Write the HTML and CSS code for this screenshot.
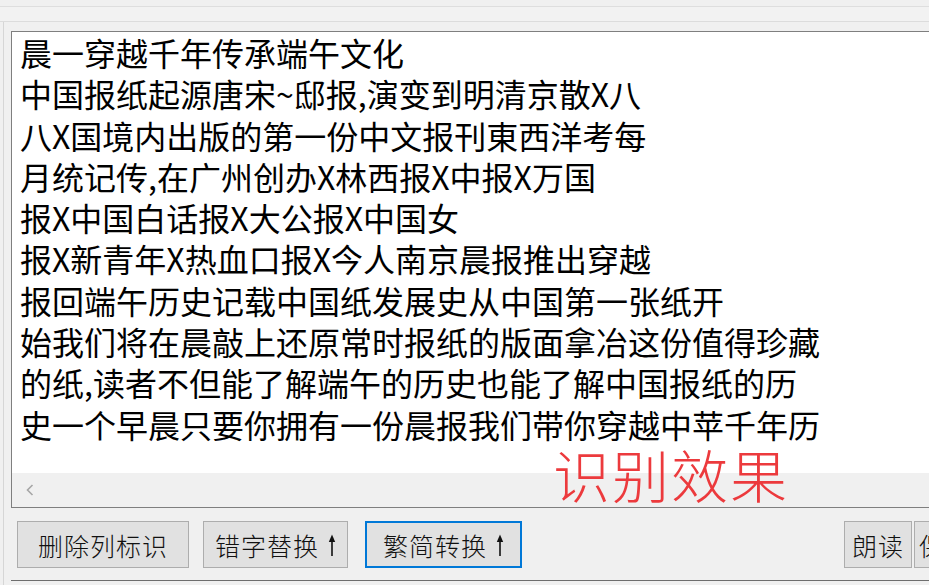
FILE: index.html
```html
<!DOCTYPE html>
<html lang="zh-CN">
<head>
<meta charset="utf-8">
<title>识别效果</title>
<link rel="stylesheet" href="styles.css">
</head>
<body>
<div class="window">
  <div class="strip-a"></div>
  <div class="strip-b"></div>
  <div class="main">
    <div class="edge"></div>
    <div class="content">
      <div class="textbox">
        <div class="text">
          <div class="line">晨一穿越千年传承端午文化</div>
          <div class="line">中国报纸起源唐宋~邸报,演变到明清京散X八</div>
          <div class="line">八X国境内出版的第一份中文报刊東西洋考每</div>
          <div class="line">月统记传,在广州创办X林西报X中报X万国</div>
          <div class="line">报X中国白话报X大公报X中国女</div>
          <div class="line">报X新青年X热血口报X今人南京晨报推出穿越</div>
          <div class="line">报回端午历史记载中国纸发展史从中国第一张纸开</div>
          <div class="line">始我们将在晨敲上还原常时报纸的版面拿冶这份值得珍藏</div>
          <div class="line">的纸,读者不但能了解端午的历史也能了解中国报纸的历</div>
          <div class="line">史一个早晨只要你拥有一份晨报我们带你穿越中苹千年历</div>
        </div>
        <div class="hscroll">
          <svg class="chev" width="8" height="12" viewBox="0 0 8 12"><path d="M6.5 1 L1.5 6 L6.5 11" fill="none" stroke="#a6a6a6" stroke-width="1.6"/></svg>
        </div>
      </div>
      <div class="buttons">
        <button class="btn btn-del">删除列标识</button>
        <button class="btn btn-err">错字替换<svg class="arrow" width="8" height="22" viewBox="0 0 8 22"><path d="M4 6 V22" stroke="#111" stroke-width="1.6"/><path d="M0.8 8 L4 0.5 L7.2 8 Z" fill="#111"/></svg></button>
        <button class="btn btn-conv focus">繁简转换<svg class="arrow" width="8" height="22" viewBox="0 0 8 22"><path d="M4 6 V22" stroke="#111" stroke-width="1.6"/><path d="M0.8 8 L4 0.5 L7.2 8 Z" fill="#111"/></svg></button>
        <button class="btn btn-read">朗读</button>
        <button class="btn btn-save">保存</button>
      </div>
    </div>
  </div>
  <div class="stamp">识别效果</div>
</div>
</body>
</html>
```

FILE: styles.css
```css
html, body {
  margin: 0;
  padding: 0;
}
body {
  background: #f0f0f0;
  font-family: "Noto Sans CJK SC", "Noto Sans", sans-serif;
}
.window {
  position: relative;
  width: 929px;
  height: 585px;
  overflow: hidden;
  background: #f0f0f0;
  display: flex;
  flex-direction: column;
}
.strip-a {
  height: 6px;
  border-bottom: 1px solid #dedede;
  background: #f0f0f0;
}
.strip-b {
  height: 14px;
  border-bottom: 1px solid #dcdcdc;
  background: #f2f2f2;
}
.main {
  flex: 1;
  display: flex;
}
.edge {
  width: 3px;
  border-right: 1px solid #d6d6d6;
}
.content {
  flex: 1;
  min-width: 0;
  padding-top: 9px;
  padding-left: 7px;
  display: flex;
  flex-direction: column;
}
.textbox {
  border: 1px solid #7f7f7f;
  border-right: none;
  background: #fff;
  display: flex;
  flex-direction: column;
}
.text {
  height: 441px;
  padding-left: 8px;
  padding-top: 0;
  box-sizing: border-box;
  overflow: hidden;
  color: #000;
  font-size: 32px;
  line-height: 41.3px;
  white-space: nowrap;
}
.hscroll {
  height: 34px;
  background: #f0f0f0;
  display: flex;
  align-items: center;
  padding-left: 14px;
}
.chev {
  display: block;
}
.buttons {
  height: 59px;
  padding-top: 13px;
  padding-left: 6px;
  display: flex;
  align-items: flex-start;
  border-bottom: 1px solid #6e6e6e;
}
.btn {
  height: 47px;
  margin: 0;
  padding: 0;
  background: #e1e1e1;
  border: 1px solid #adadad;
  font-family: "Noto Sans CJK SC", sans-serif;
  font-size: 25px;
  letter-spacing: 1px;
  font-weight: 300;
  color: #111;
  display: flex;
  align-items: center;
  justify-content: center;
  gap: 9px;
  flex-shrink: 0;
}
.btn-del {
  width: 172px;
}
.btn-err {
  width: 145px;
  margin-left: 14px;
}
.btn-conv {
  width: 157px;
  margin-left: 17px;
}
.focus {
  border: 2px solid #0078d7;
}
.btn-read {
  width: 68px;
  margin-left: auto;
}
.btn-save {
  width: 68px;
  margin-left: 2px;
  margin-right: -53px;
  justify-content: flex-start;
  padding-left: 4px;
}
.arrow {
  display: block;
}
.stamp {
  position: absolute;
  left: 553px;
  top: 445px;
  font-family: "Noto Sans CJK SC", sans-serif;
  font-size: 57px;
  line-height: 57px;
  letter-spacing: 2px;
  font-weight: 300;
  color: #ec3a3d;
  white-space: nowrap;
}
```
